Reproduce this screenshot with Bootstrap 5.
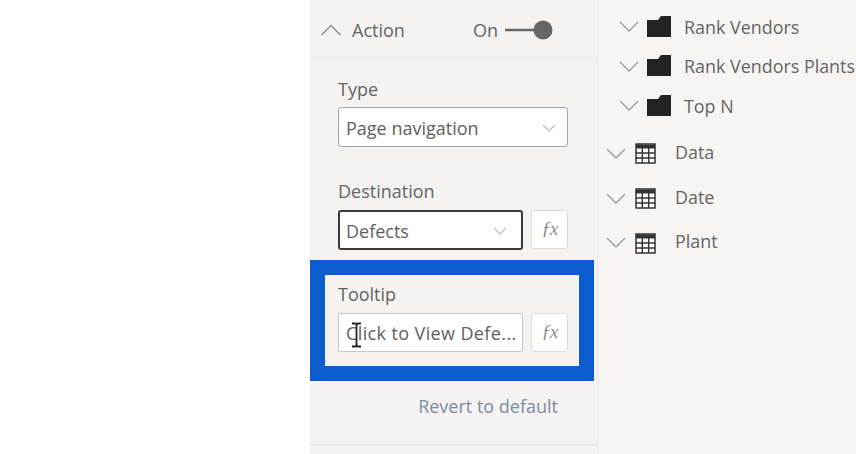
<!DOCTYPE html>
<html lang="en">
<head>
<meta charset="utf-8">
<title>Action</title>
<link href="https://cdn.jsdelivr.net/npm/bootstrap@5.3.0/dist/css/bootstrap.min.css" rel="stylesheet">
<style>
html,body{height:100%;margin:0;overflow:hidden}
body{font-family:"Open Sans","Noto Sans","Liberation Sans",sans-serif;font-size:18px;color:#666462;background:#fff;width:856px;height:454px}
.blank-col{width:310px;height:454px;background:#fff}
.pane-col{width:288px;height:454px;background:#f4f3f2;border-right:1px solid #e9e8e7}
.fields-col{width:258px;height:454px;background:#f6f5f4;padding-top:7px}
.pane-head{height:59px;padding:3px 0 0 10px;border-bottom:2px solid #eceae9;box-sizing:border-box}
.pane-head .ttl{margin-left:10px;width:121px}
.tog{width:48px;height:20px;margin-left:7px}
.pane-body{padding:0 29px 0 28px}
.lbl{height:22px;line-height:22px;margin:0 0 7px}
.lbl-type{margin-top:19px}
.lbl-dest{margin-top:33px;margin-bottom:8px}
.fld{height:40px;background:#fff;border:1px solid #a8a6a4;border-radius:3px;padding:1px 7px 0;line-height:38px;white-space:nowrap;overflow:hidden;color:#605e5c}
.fld-type{width:230px}
.fld-dest{width:185px;border:2px solid #3a3937;padding:1px 6px 0;line-height:36px}
.fld-tip{width:185px;border-color:#c9c7c5;border-radius:1px;letter-spacing:.38px}
.fxb{width:37px;height:39px;background:#fff;border:1px solid #dddbd9;border-radius:3px;font-family:"Liberation Serif",serif;font-style:italic;font-size:19px;letter-spacing:-1px;color:#8b8a88;margin-left:8px}
.hl{height:121px;margin:10px 3px 0 0;border:15px solid #0b5ccf;padding:10px 0 0 13px;position:relative;background:#f4f3f2}
.hl .lbl{margin-bottom:10px;height:18px;line-height:18px}
.hl .fld{height:39px;line-height:37px}
.ibeam{position:absolute;left:26px;top:47px;width:11px;height:26px}
.revert{color:#7b8ca3;margin:13px 10px 0 0;line-height:24px;text-align:right}
.pane-foot{margin-top:26px;border-top:2px solid #eceae9}
.tree-row{line-height:24px;white-space:nowrap;color:#666462;font-size:17.9px}
.tree-folder{height:39.5px;padding-left:21px}
.tree-table{height:44.7px;padding-left:8px}
.tree-table-first{margin-top:4px}
.tree-folder .fname{margin-left:12px}
.tree-table .fname{margin-left:19px}
.chev{flex:none}
.tree-table .chev{margin-top:3px}
.tree-table .tico{margin-top:4px;margin-left:9px}
.tree-folder .fico{margin-bottom:1px;margin-left:8px}
.drop-chev{flex:none}
</style>
</head>
<body class="d-flex">
<div class="blank-col flex-shrink-0"></div>
<div class="pane-col flex-shrink-0">
  <div class="pane-head d-flex align-items-center">
    <svg width="22" height="14" viewBox="0 0 22 14" class="chev"><path d="M1.5 12 11 2.5 20.5 12" fill="none" stroke="#8f8d8b" stroke-width="1.4"/></svg>
    <span class="ttl">Action</span>
    <span>On</span>
    <svg class="tog" viewBox="0 0 48 20"><path d="M0 10H32" stroke="#666" stroke-width="2.5"/><circle cx="38" cy="10" r="9.5" fill="#666"/></svg>
  </div>
  <div class="pane-body">
    <div class="lbl lbl-type">Type</div>
    <div class="fld fld-type d-flex align-items-center justify-content-between">
      <span>Page navigation</span>
      <svg width="14" height="8" viewBox="0 0 14 8" class="drop-chev me-1"><path d="M1 1l6 6 6-6" fill="none" stroke="#bdbbb9" stroke-width="1.2"/></svg>
    </div>
    <div class="lbl lbl-dest">Destination</div>
    <div class="d-flex">
      <div class="fld fld-dest d-flex align-items-center justify-content-between">
        <span>Defects</span>
        <svg width="14" height="8" viewBox="0 0 14 8" class="drop-chev me-2"><path d="M1 1l6 6 6-6" fill="none" stroke="#bdbbb9" stroke-width="1.2"/></svg>
      </div>
      <div class="fxb d-flex align-items-center justify-content-center">ƒx</div>
    </div>
  </div>
  <div class="hl">
    <div class="lbl">Tooltip</div>
    <div class="d-flex">
      <div class="fld fld-tip">Click to View Defe...</div>
      <div class="fxb d-flex align-items-center justify-content-center">ƒx</div>
    </div>
    <svg class="ibeam" viewBox="0 0 11 26"><path d="M1 1.5h3.5l1 1 1-1H10M5.5 2.5v21M1 24.5h3.5l1-1 1 1H10" fill="none" stroke="#222" stroke-width="1.8"/></svg>
  </div>
  <div class="pane-body">
    <div class="revert">Revert to default</div>
  </div>
  <div class="pane-foot"></div>
</div>
<div class="fields-col flex-grow-1">
  <div>
    <div class="tree-row tree-folder d-flex align-items-center">
      <svg width="20" height="11" viewBox="0 0 20 11" class="chev"><path d="M1 1l9 9 9-9" fill="none" stroke="#9b9a98" stroke-width="1.3"/></svg>
      <svg width="25" height="23" viewBox="0 0 25 23" class="chev fico"><path d="M0 5h11l3-4h10v21H0z" fill="#232323"/></svg>
      <span class="fname">Rank Vendors</span>
    </div>
    <div class="tree-row tree-folder d-flex align-items-center">
      <svg width="20" height="11" viewBox="0 0 20 11" class="chev"><path d="M1 1l9 9 9-9" fill="none" stroke="#9b9a98" stroke-width="1.3"/></svg>
      <svg width="25" height="23" viewBox="0 0 25 23" class="chev fico"><path d="M0 5h11l3-4h10v21H0z" fill="#232323"/></svg>
      <span class="fname">Rank Vendors Plants</span>
    </div>
    <div class="tree-row tree-folder d-flex align-items-center">
      <svg width="20" height="11" viewBox="0 0 20 11" class="chev"><path d="M1 1l9 9 9-9" fill="none" stroke="#9b9a98" stroke-width="1.3"/></svg>
      <svg width="25" height="23" viewBox="0 0 25 23" class="chev fico"><path d="M0 5h11l3-4h10v21H0z" fill="#232323"/></svg>
      <span class="fname">Top N</span>
    </div>
    <div class="tree-row tree-table tree-table-first d-flex align-items-center">
      <svg width="20" height="11" viewBox="0 0 20 11" class="chev"><path d="M1 1l9 9 9-9" fill="none" stroke="#9b9a98" stroke-width="1.3"/></svg>
      <svg width="21" height="21" viewBox="0 0 21 21" class="chev tico"><path d="M1 1h19v19H1z" fill="#fff" stroke="#333" stroke-width="1.5"/><path d="M1 3.5h19" stroke="#333" stroke-width="4"/><path d="M1 10h19M1 15h19M7.3 5v15M13.7 5v15" stroke="#333" stroke-width="1.4"/></svg>
      <span class="fname">Data</span>
    </div>
    <div class="tree-row tree-table d-flex align-items-center">
      <svg width="20" height="11" viewBox="0 0 20 11" class="chev"><path d="M1 1l9 9 9-9" fill="none" stroke="#9b9a98" stroke-width="1.3"/></svg>
      <svg width="21" height="21" viewBox="0 0 21 21" class="chev tico"><path d="M1 1h19v19H1z" fill="#fff" stroke="#333" stroke-width="1.5"/><path d="M1 3.5h19" stroke="#333" stroke-width="4"/><path d="M1 10h19M1 15h19M7.3 5v15M13.7 5v15" stroke="#333" stroke-width="1.4"/></svg>
      <span class="fname">Date</span>
    </div>
    <div class="tree-row tree-table d-flex align-items-center">
      <svg width="20" height="11" viewBox="0 0 20 11" class="chev"><path d="M1 1l9 9 9-9" fill="none" stroke="#9b9a98" stroke-width="1.3"/></svg>
      <svg width="21" height="21" viewBox="0 0 21 21" class="chev tico"><path d="M1 1h19v19H1z" fill="#fff" stroke="#333" stroke-width="1.5"/><path d="M1 3.5h19" stroke="#333" stroke-width="4"/><path d="M1 10h19M1 15h19M7.3 5v15M13.7 5v15" stroke="#333" stroke-width="1.4"/></svg>
      <span class="fname">Plant</span>
    </div>
  </div>
</div>
<script src="https://cdn.jsdelivr.net/npm/bootstrap@5.3.0/dist/js/bootstrap.bundle.min.js"></script>
</body>
</html>
